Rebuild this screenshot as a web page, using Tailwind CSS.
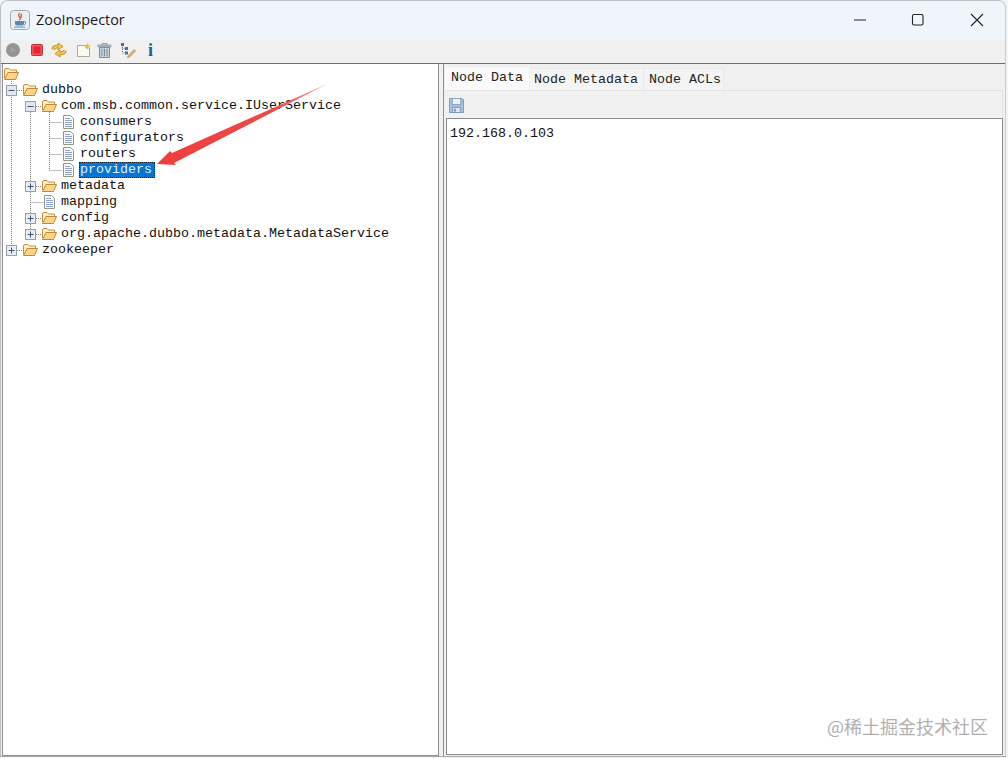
<!DOCTYPE html>
<html lang="en">
<head>
    <meta charset="UTF-8">
    <title>ZooInspector</title>
    <script src="https://cdn.jsdelivr.net/npm/@tailwindcss/browser@4"></script>
</head>
<body class="bg-[#f4f4f4]">
    <svg class="hidden">
        <symbol id="folder" viewBox="0 0 15 12">
            <path d="M.5 10V2Q.5.5 2 .5H5L6.5 2H12.5V5" fill="#ffeec4" stroke="#c48f3a"/>
            <path d="M.5 11.5H11.5L14.5 4.5H4Z" fill="#fbd68a" stroke="#bf8a34" stroke-linejoin="round"/>
        </symbol>
        <symbol id="file" viewBox="0 0 11 14">
            <path d="M.5.5H7.5L10.5 3.5V13.5H.5Z" fill="#fdfdf8" stroke="#94987f"/>
            <path d="M2 3.5H7M2 5.5H9M2 7.5H9M2 9.5H9M2 11.5H9" stroke="#8ea3cf"/>
        </symbol>
        <symbol id="plus" viewBox="0 0 11 11">
            <rect x=".5" y=".5" width="10" height="10" fill="#e9edf0" stroke="#93a0ad"/>
            <path d="M2.5 5.5H8.5M5.5 2.5V8.5" stroke="#3a5578"/>
        </symbol>
        <symbol id="minus" viewBox="0 0 11 11">
            <rect x=".5" y=".5" width="10" height="10" fill="#e4e7ea" stroke="#93a0ad"/>
            <path d="M2.5 5.5H8.5" stroke="#3a5578"/>
        </symbol>
    </svg>

    <div class="w-[1008px] h-[758px] overflow-hidden flex flex-col">
        <div class="w-[1006px] h-[756px] bg-[#f0f0f0] rounded-t-[8px] border border-b-0 border-[#bdbfc2] border-r-[#c9cbce] flex flex-col overflow-hidden shadow-[0_1px_0_#aaa]">
            <!-- title bar -->
            <div class="h-[39px] shrink-0 bg-[#f0f5fb] flex items-center pl-[9px] pb-[2px]">
                <svg class="w-[20px] h-[20px]" viewBox="0 0 20 20">
                    <rect x=".5" y=".5" width="19" height="19" rx="3" fill="#eceff2" stroke="#a5a8ad"/>
                    <path d="M10 3Q7.5 5 9.5 7T9 10M12 4Q10 6 12 7.5" fill="none" stroke="#d9532a" stroke-width="1.3"/>
                    <path d="M5 11H14V13.5Q14 15.5 12 15.5H7Q5 15.5 5 13.5Z" fill="#5d87b5"/>
                    <path d="M14 11.5Q16.5 11.5 15.5 13.5T13.5 14.5" fill="none" stroke="#5d87b5"/>
                    <path d="M4 17H15" stroke="#5d87b5" stroke-width="1.2"/>
                </svg>
                <span class="ml-[6px] text-[14.4px] text-[#1a1a1a] font-['Open_Sans',sans-serif]">ZooInspector</span>
                <div class="ml-auto flex items-center">
                    <svg class="w-[14px] h-[14px] mr-[44px]" viewBox="0 0 14 14"><path d="M1 7H13" stroke="#222" stroke-width="1.1"/></svg>
                    <svg class="w-[14px] h-[14px] mr-[45px]" viewBox="0 0 14 14"><rect x="1.5" y="1.5" width="10.5" height="10.5" rx="1.5" fill="none" stroke="#222" stroke-width="1.1"/></svg>
                    <svg class="w-[14px] h-[14px] mr-[21px]" viewBox="0 0 14 14"><path d="M1 1L13 13M13 1L1 13" stroke="#222" stroke-width="1.1"/></svg>
                </div>
            </div>
            <!-- toolbar -->
            <div class="h-[24px] shrink-0 border-b border-[#6e6e6e] flex items-center pl-[4px] pb-[3px]">
                <svg class="w-[16px] h-[16px]" viewBox="0 0 16 16"><circle cx="8" cy="8" r="7" fill="#949494"/><path d="M6 5L11 8L6 11Z" fill="#a0a0a0"/></svg>
                <svg class="w-[12px] h-[12px] ml-[10px]" viewBox="0 0 12 12"><rect x=".5" y=".5" width="11" height="11" rx="1" fill="#f2545c" stroke="#c5303a"/><rect x="2.5" y="2.5" width="7" height="7" fill="#e8232f"/></svg>
                <svg class="w-[16px] h-[16px] ml-[8px]" viewBox="0 0 16 16">
                    <path d="M2 7.5Q3 4 7.5 4.5" fill="none" stroke="#b9851f" stroke-width="3.6"/>
                    <path d="M14 8.5Q13 12 8.5 11.5" fill="none" stroke="#b9851f" stroke-width="3.6"/>
                    <path d="M7 1L12 4.5L7 8Z" fill="#f7ca4a" stroke="#b9851f" stroke-width=".8"/>
                    <path d="M9 8L4 11.5L9 15Z" fill="#f7ca4a" stroke="#b9851f" stroke-width=".8"/>
                    <path d="M2 7.5Q3 4 7.5 4.5" fill="none" stroke="#f7ca4a" stroke-width="2"/>
                    <path d="M14 8.5Q13 12 8.5 11.5" fill="none" stroke="#f7ca4a" stroke-width="2"/>
                </svg>
                <svg class="w-[14px] h-[14px] ml-[10px]" viewBox="0 0 14 14"><path d="M.5 2.5H9V5H12.5V13.5H.5Z" fill="#fbfbf1" stroke="#a9ab96"/><path d="M10.5 0L11.5 2.2L14 3L11.5 3.8L10.5 6.5L9.5 3.8L7 3L9.5 2.2Z" fill="#f0b818"/></svg>
                <svg class="w-[15px] h-[15px] ml-[6px]" viewBox="0 0 15 15"><path d="M5 2V.7H10V2" fill="none" stroke="#7d8f9c"/><rect x="1" y="2" width="13" height="2" fill="#aebcc6" stroke="#7d8f9c" stroke-width=".6"/><path d="M2.5 4.5H12.5V14.5H2.5Z" fill="#c3d0d8" stroke="#7d8f9c"/><path d="M5 6V13M7.5 6V13M10 6V13" stroke="#7d8f9c"/></svg>
                <svg class="w-[16px] h-[16px] ml-[8px]" viewBox="0 0 16 16"><path d="M2.5 3V11H5M2.5 6.5H5" fill="none" stroke="#46729e" stroke-dasharray="1 1"/><rect x="1" y="1" width="3" height="3" fill="#46729e"/><rect x="5" y="5" width="3" height="3" fill="#46729e"/><rect x="5" y="9.5" width="3" height="3" fill="#46729e"/><path d="M8 14L14 7.5L15.5 9L9.5 15L7.5 15.5Z" fill="#e8bb62" stroke="#9c7a30" stroke-width=".6"/></svg>
                <span class="ml-[12px] text-[18px] leading-none font-bold text-[#1b5e93] font-['Liberation_Serif',serif]">i</span>
            </div>
            <!-- split pane -->
            <div class="flex-1 min-h-0 flex text-[13.33px] leading-4 text-[#111] font-['Liberation_Mono',monospace]">
                <!-- tree -->
                <div class="relative w-[437px] ml-px bg-white border-r border-b border-l border-[#8f8f8f] pt-[2px]">
                    <svg class="absolute left-0 top-0 w-[200px] h-[200px]" viewBox="0 0 200 200">
                        <g stroke="#808080" stroke-dasharray="1 1" fill="none">
                            <path d="M8.5 17V182"/>
                            <path d="M14 26.5H20M14 186.5H20"/>
                            <path d="M27.5 48V170"/>
                            <path d="M33 42.5H39M33 122.5H39M27.5 138.5H41M33 154.5H39M33 170.5H39"/>
                            <path d="M46.5 48V106.5"/>
                            <path d="M46.5 58.5H59M46.5 74.5H59M46.5 90.5H59M46.5 106.5H59"/>
                        </g>
                    </svg>
                    <div class="relative">
                        <div class="flex h-4 items-center pl-px"><svg class="w-[15px] h-[12px]"><use href="#folder"/></svg></div>
                        <div class="flex h-4 items-center pl-[3px]"><svg class="w-[11px] h-[11px]"><use href="#minus"/></svg><svg class="w-[15px] h-[12px] ml-[6px]"><use href="#folder"/></svg><span class="ml-[4px]">dubbo</span></div>
                        <div class="flex h-4 items-center pl-[22px]"><svg class="w-[11px] h-[11px]"><use href="#minus"/></svg><svg class="w-[15px] h-[12px] ml-[6px]"><use href="#folder"/></svg><span class="ml-[4px]">com.msb.common.service.IUserService</span></div>
                        <div class="flex h-4 items-center pl-[60px]"><svg class="w-[11px] h-[14px]"><use href="#file"/></svg><span class="ml-[6px]">consumers</span></div>
                        <div class="flex h-4 items-center pl-[60px]"><svg class="w-[11px] h-[14px]"><use href="#file"/></svg><span class="ml-[6px]">configurators</span></div>
                        <div class="flex h-4 items-center pl-[60px]"><svg class="w-[11px] h-[14px]"><use href="#file"/></svg><span class="ml-[6px]">routers</span></div>
                        <div class="flex h-4 items-center pl-[60px]"><svg class="w-[11px] h-[14px]"><use href="#file"/></svg><span class="ml-[5px] pl-px pr-[3px] bg-[#0a74d0] text-[#d8f0ff] outline-1 outline-dotted outline-[#10243a] -outline-offset-1">providers</span></div>
                        <div class="flex h-4 items-center pl-[22px]"><svg class="w-[11px] h-[11px]"><use href="#plus"/></svg><svg class="w-[15px] h-[12px] ml-[6px]"><use href="#folder"/></svg><span class="ml-[4px]">metadata</span></div>
                        <div class="flex h-4 items-center pl-[41px]"><svg class="w-[11px] h-[14px]"><use href="#file"/></svg><span class="ml-[6px]">mapping</span></div>
                        <div class="flex h-4 items-center pl-[22px]"><svg class="w-[11px] h-[11px]"><use href="#plus"/></svg><svg class="w-[15px] h-[12px] ml-[6px]"><use href="#folder"/></svg><span class="ml-[4px]">config</span></div>
                        <div class="flex h-4 items-center pl-[22px]"><svg class="w-[11px] h-[11px]"><use href="#plus"/></svg><svg class="w-[15px] h-[12px] ml-[6px]"><use href="#folder"/></svg><span class="ml-[4px]">org.apache.dubbo.metadata.MetadataService</span></div>
                        <div class="flex h-4 items-center pl-[3px]"><svg class="w-[11px] h-[11px]"><use href="#plus"/></svg><svg class="w-[15px] h-[12px] ml-[6px]"><use href="#folder"/></svg><span class="ml-[4px]">zookeeper</span></div>
                    </div>
                </div>
                <!-- right side -->
                <div class="ml-[4px] w-[561px] flex flex-col border-l border-[#8f8f8f] pl-[2px] pb-[1px]">
                    <div class="flex items-end h-[26px] shrink-0 text-[#222]">
                        <div class="h-[24px] w-[85px] -ml-[2px] bg-[#fafafa] border-t border-l border-[#ececec] pl-[6px] leading-[22px]">Node Data</div>
                        <div class="h-[22px] w-[114px] ml-px bg-[#f4f4f4] border-t border-r border-[#e9e9e9] pl-[4px] leading-[21px]">Node Metadata</div>
                        <div class="h-[22px] w-[80px] bg-[#f4f4f4] border-t border-r border-[#e9e9e9] pl-[5px] leading-[21px]">Node ACLs</div>
                    </div>
                    <div class="h-[28px] w-[557px] shrink-0 bg-[#f1f1f1] border-t border-r border-[#e2e2e2] flex items-center pl-[3px]">
                        <svg class="w-[15px] h-[15px] mt-px" viewBox="0 0 16 16"><path d="M.5.5H14L15.5 2V15.5H.5Z" fill="#a9c0dc" stroke="#7a97bb"/><rect x="3.5" y=".5" width="9" height="6.5" fill="#eef1f5" stroke="#8ba3c0"/><rect x="4" y="10" width="8" height="5.5" fill="#dfe6ee" stroke="#7a97bb"/><rect x="5.5" y="11.5" width="2" height="3" fill="#7a97bb"/></svg>
                    </div>
                    <div class="relative flex-1 w-[557px] bg-white border border-[#8a8a8a] pl-[3px] pt-[7px] text-[#111]">192.168.0.103
                        <span class="absolute right-[14px] bottom-[16px] text-[18px] leading-6 text-[#b0b0b0] font-['Noto_Sans_CJK_SC',sans-serif]">@稀土掘金技术社区</span>
                    </div>
                </div>
            </div>
        </div>
    </div>

    <!-- red annotation arrow -->
    <svg class="absolute left-0 top-0 w-[340px] h-[180px]" viewBox="0 0 340 180">
        <defs>
            <linearGradient id="arrow-fade" x1="327" y1="84" x2="157" y2="164" gradientUnits="userSpaceOnUse">
                <stop offset="0" stop-color="#f4a0a0"/>
                <stop offset=".3" stop-color="#ee4a4a"/>
                <stop offset="1" stop-color="#ee3d3d"/>
            </linearGradient>
        </defs>
        <path d="M327 84L172 153L170 151L157 164L176 165L174 163Z" fill="url(#arrow-fade)"/>
    </svg>
</body>
</html>
